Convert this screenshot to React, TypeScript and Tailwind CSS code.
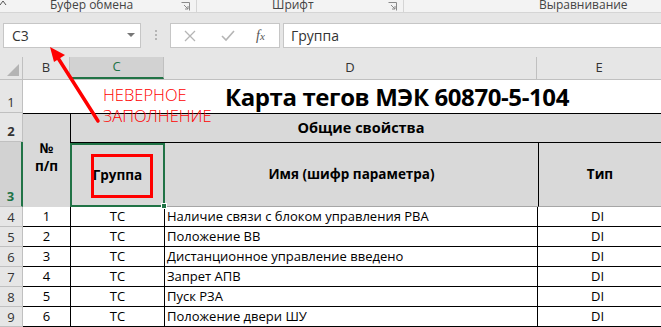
import React from 'react';

const font = { fontFamily: '"Open Sans", "Noto Sans", sans-serif' };

const rows = [
  { n: 4, idx: '1', grp: 'ТС', name: 'Наличие связи с блоком управления РВА', type: 'DI' },
  { n: 5, idx: '2', grp: 'ТС', name: 'Положение ВВ', type: 'DI' },
  { n: 6, idx: '3', grp: 'ТС', name: 'Дистанционное управление введено', type: 'DI' },
  { n: 7, idx: '4', grp: 'ТС', name: 'Запрет АПВ', type: 'DI' },
  { n: 8, idx: '5', grp: 'ТС', name: 'Пуск РЗА', type: 'DI' },
  { n: 9, idx: '6', grp: 'ТС', name: 'Положение двери ШУ', type: 'DI' },
];

function Launcher() {
  return (
    <svg width="9" height="9" viewBox="0 0 9 9" className="text-[#8a8a8a]">
      <path d="M0.5 0.5h8v8" fill="none" stroke="currentColor" />
      <path d="M3 3l4 4M7 4v3H4" fill="none" stroke="currentColor" />
    </svg>
  );
}

function Ribbon() {
  return (
    <div className="relative flex h-[13px] items-end border-b border-[#d5d5d5] bg-[#f3f3f3] text-[12px] leading-[13px] text-[#444]">
      <svg className="absolute left-0 top-0" width="8" height="6" viewBox="0 0 8 6">
        <path d="M0 5l3-4 3 4" fill="none" stroke="#555" />
      </svg>
      <div className="flex w-[197px] items-end justify-between border-r border-[#d5d5d5] pb-[1px] pl-[50px] pr-[6px]">
        <span>Буфер обмена</span>
        <Launcher />
      </div>
      <div className="flex w-[207px] items-end justify-between border-r border-[#d5d5d5] pb-[1px] pl-[75px] pr-[6px]">
        <span>Шрифт</span>
        <Launcher />
      </div>
      <div className="flex-1 pb-[1px] pl-[135px]">
        <span>Выравнивание</span>
      </div>
    </div>
  );
}

function FormulaBar() {
  return (
    <div className="flex h-[44px] items-start bg-[#e6e6e6] pt-[10px]">
      <div className="ml-[3px] flex h-[25px] w-[138px] items-center justify-between border border-[#c6c6c6] bg-white pl-[8px] pr-[5px] text-[14px] text-[#333]">
        <span>C3</span>
        <svg width="8" height="5" viewBox="0 0 8 5">
          <path d="M0 0h8L4 4z" fill="#777" />
        </svg>
      </div>
      <div className="ml-[14px] mr-[13px] mt-[7px] flex flex-col gap-[2px]">
        <span className="block h-[2px] w-[2px] bg-[#b5b5b5]" />
        <span className="block h-[2px] w-[2px] bg-[#b5b5b5]" />
        <span className="block h-[2px] w-[2px] bg-[#b5b5b5]" />
      </div>
      <div className="flex h-[25px] w-[110px] items-center border border-[#c6c6c6] bg-white pl-[13px] text-[#b5b5b5]">
        <svg width="12" height="12" viewBox="0 0 12 12">
          <path d="M1 1l10 10M11 1L1 11" stroke="currentColor" strokeWidth="1.3" />
        </svg>
        <svg className="ml-[25px]" width="14" height="12" viewBox="0 0 14 12">
          <path d="M1 6l4 4 8-9" fill="none" stroke="currentColor" strokeWidth="1.6" />
        </svg>
        <span className="ml-[21px] font-['Liberation_Serif',serif] text-[14px] italic text-[#555]">
          f<span className="text-[11px]">x</span>
        </span>
      </div>
      <div className="ml-[3px] flex h-[25px] flex-1 items-center border-y border-l border-[#c6c6c6] bg-white pl-[7px] text-[14px] text-[#333]">
        Группа
      </div>
    </div>
  );
}

function ColHeaders() {
  return (
    <div className="flex h-[23px] border-b border-[#c0c0c0] bg-[#e6e6e6] text-[13px] text-[#333]">
      <div className="relative w-[23px] border-r border-[#c0c0c0]">
        <svg className="absolute bottom-[3px] right-[3px]" width="12" height="12" viewBox="0 0 12 12">
          <path d="M12 0v12H0z" fill="#b4b4b4" />
        </svg>
      </div>
      <div className="flex w-[47px] items-center justify-center border-r border-[#c0c0c0]">B</div>
      <div className="flex w-[94px] items-center justify-center border-b-2 border-r border-b-[#217346] border-r-[#c0c0c0] bg-[#d2d2d2] text-[#217346]">C</div>
      <div className="flex w-[373px] items-center justify-center border-r border-[#c0c0c0]">D</div>
      <div className="flex flex-1 items-center justify-center">E</div>
    </div>
  );
}

function RowNum({ n, h, active, center }: { n: number; h: string; active?: boolean; center?: boolean }) {
  return (
    <div
      className={`flex w-[23px] shrink-0 justify-center border-b border-r text-[13px] leading-[18px] ${center ? 'items-center' : 'items-end pb-[1px]'} ${h} ${
        active ? 'border-b-[#c0c0c0] border-r-2 border-r-[#217346] bg-[#d2d2d2] text-[#217346]' : 'border-[#c0c0c0] bg-[#e6e6e6] text-[#333]'
      }`}
    >
      {n}
    </div>
  );
}

export default function App() {
  return (
    <div className="relative h-[327px] w-[661px] overflow-hidden bg-[#e6e6e6]" style={font}>
      <Ribbon />
      <FormulaBar />
      <ColHeaders />

      {/* row 1 */}
      <div className="flex h-[33px]">
        <RowNum n={1} h="h-[33px]" />
        <div className="flex flex-1 items-center bg-white pl-[202px] text-[24px] font-bold tracking-[-0.4px] text-black">
          Карта тегов МЭК 60870-5-104
        </div>
      </div>

      {/* rows 2-3 */}
      <div className="flex h-[94px] text-[13.5px] font-bold text-black">
        <div className="flex flex-col">
          <RowNum n={2} h="h-[29px]" />
          <RowNum n={3} h="h-[65px]" active />
        </div>
        <div className="flex w-[47px] flex-col items-center justify-center border-t border-black bg-[#d9d9d9] pb-[8px] leading-[18px]">
          <span>№</span>
          <span>п/п</span>
        </div>
        <div className="flex flex-1 flex-col bg-[#d9d9d9]">
          <div className="flex h-[29px] items-center justify-center border-l border-t border-black pr-[10px] text-[14.5px]">
            Общие свойства
          </div>
          <div className="flex h-[65px] border-t border-black">
            <div className="relative flex w-[95px] items-center justify-center border-2 border-[#217346]">
              Группа
              <div className="absolute left-[19px] top-[9px] h-[44px] w-[62px] border-[3px] border-[#ff0000]" />
              <div className="absolute -bottom-[4px] -right-[4px] h-[6px] w-[6px] border border-white bg-[#217346]" />
            </div>
            <div className="flex w-[373px] items-center justify-center border-b border-[#a6a6a6]">
              Имя (шифр параметра)
            </div>
            <div className="flex flex-1 items-center justify-center border-b border-l border-[#a6a6a6] border-l-black">
              Тип
            </div>
          </div>
        </div>
      </div>

      {/* data rows */}
      {rows.map((r) => (
        <div key={r.n} className="flex h-[20px] text-[13px] text-black">
          <RowNum n={r.n} h="h-[20px]" center />
          <div className="flex w-[47px] items-center justify-center border-b border-black bg-white">{r.idx}</div>
          <div className="flex w-[94px] items-center justify-center border-b border-l border-black bg-white">{r.grp}</div>
          <div className="flex w-[373px] items-center border-b border-l border-black bg-white pl-[2px]">{r.name}</div>
          <div className="flex flex-1 items-center justify-center border-b border-l border-black bg-white pr-[4px]">{r.type}</div>
        </div>
      ))}

      {/* annotation */}
      <div className="pointer-events-none absolute left-[103px] top-[84px] text-[16.5px] font-light leading-[21px] text-[#ff0000]">
        <div>НЕВЕРНОЕ</div>
        <div>ЗАПОЛНЕНИЕ</div>
      </div>
      <svg className="pointer-events-none absolute left-0 top-0" width="661" height="327" viewBox="0 0 661 327">
        <path d="M98 121L58 58" stroke="#ff0000" strokeWidth="3.5" strokeLinecap="round" />
        <path d="M50 47L65 55L54 62z" fill="#ff0000" />
      </svg>
    </div>
  );
}
